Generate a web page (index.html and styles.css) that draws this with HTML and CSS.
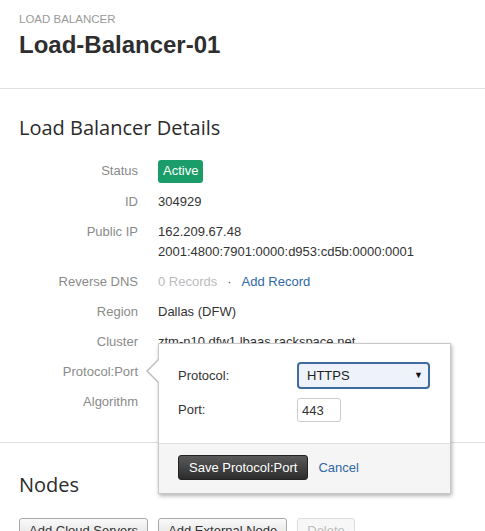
FILE: index.html
```html
<!DOCTYPE html>
<html lang="en">
<head>
    <meta charset="UTF-8">
    <meta name="viewport" content="width=device-width, initial-scale=1.0">
    <title>Load-Balancer-01</title>
    <link rel="stylesheet" href="styles.css">
</head>
<body>

<!-- page header -->
<div class="page-header">
    <div class="eyebrow">LOAD BALANCER</div>
    <h1 class="title">Load-Balancer-01</h1>
</div>

<!-- details -->
<div class="section">
    <h2 class="section-title">Load Balancer Details</h2>
    <dl class="details">
        <dt>Status</dt>
        <dd><span class="badge">Active</span></dd>

        <dt>ID</dt>
        <dd>304929</dd>

        <dt>Public IP</dt>
        <dd>162.209.67.48<br>2001:4800:7901:0000:d953:cd5b:0000:0001</dd>

        <dt>Reverse DNS</dt>
        <dd><span class="muted">0 Records</span><span class="sep">&middot;</span><a href="#" class="link">Add Record</a></dd>

        <dt>Region</dt>
        <dd>Dallas (DFW)</dd>

        <dt>Cluster</dt>
        <dd>ztm-n10.dfw1.lbaas.rackspace.net</dd>

        <dt>Protocol:Port</dt>
        <dd class="has-popover">
            <div class="popover">
                <div class="popover-body">
                    <label for="protocol">Protocol:</label>
                    <span class="select-wrap">
                        <select id="protocol" class="select">
                            <option>HTTPS</option>
                            <option>HTTP</option>
                        </select>
                    </span>

                    <label for="port">Port:</label>
                    <span><input type="text" id="port" class="port-input" value="443"></span>
                </div>
                <div class="popover-footer">
                    <button class="btn-dark">Save Protocol:Port</button>
                    <a href="#" class="link">Cancel</a>
                </div>
            </div>
        </dd>

        <dt>Algorithm</dt>
        <dd></dd>
    </dl>
</div>

<!-- nodes -->
<div class="section nodes">
    <h2 class="section-title">Nodes</h2>
    <div class="toolbar">
        <button class="btn">Add Cloud Servers</button>
        <button class="btn">Add External Node</button>
        <button class="btn" disabled>Delete</button>
    </div>
</div>

</body>
</html>
```

FILE: styles.css
```css
body {
    margin: 0;
    font-family: "Liberation Sans", Arial, sans-serif;
    font-size: 13px;
    color: #333;
    background-color: #fff;
    overflow: hidden;
}

.page-header {
    padding: 12px 19px 29px;
    border-bottom: 1px solid #e0e0e0;
}

.eyebrow {
    font-size: 11.5px;
    line-height: 14px;
    color: #999;
}

.title {
    margin: 5px 0 0;
    font-size: 24px;
    line-height: 28px;
    font-weight: bold;
    color: #2e2e2e;
}

.section {
    padding: 27px 19px 30px;
    border-bottom: 1px solid #e0e0e0;
}

.section-title {
    margin: 0;
    font-family: "Open Sans", sans-serif;
    font-size: 20px;
    line-height: 24px;
    font-weight: normal;
    color: #2b2b2b;
}

/* 詳細リスト */
.details {
    display: grid;
    grid-template-columns: 119px 1fr;
    grid-auto-rows: minmax(20px, auto);
    column-gap: 20px;
    row-gap: 10px;
    margin: 21px 0 0;
    line-height: 20px;
}

.details dt {
    text-align: right;
    color: #8a8a8a;
}

.details dd {
    margin: 0;
    white-space: nowrap;
}

.badge {
    display: inline-block;
    padding: 1px 5px 2px;
    margin: -2px 0 -1px;
    border-radius: 3px;
    background-color: #1a9d68;
    color: #fff;
}

.muted {
    color: #bbb;
}

.sep {
    margin: 0 10px;
    color: #555;
}

.link {
    color: #2f67a5;
    text-decoration: none;
}

/* ポップオーバー */
.has-popover {
    position: relative;
}

.popover {
    position: absolute;
    top: -19px;
    left: 0;
    width: 291px;
    background-color: #fff;
    border: 1px solid #c8c8c8;
    box-shadow: 1px 2px 4px rgba(0, 0, 0, 0.3);
    white-space: normal;
    z-index: 10;
}

.popover::before,
.popover::after {
    content: "";
    position: absolute;
    top: 15px;
    border-style: solid;
    border-color: transparent;
}

.popover::before {
    left: -13px;
    border-width: 12px 12px 12px 0;
    border-right-color: #bbb;
}

.popover::after {
    left: -11px;
    border-width: 12px 12px 12px 0;
    border-right-color: #fff;
}

.popover-body {
    display: grid;
    grid-template-columns: 119px 1fr;
    row-gap: 9px;
    align-items: center;
    padding: 18px 18px 21px 19px;
}

.popover-body label {
    color: #333;
}

.select-wrap {
    position: relative;
    display: block;
}

.select-wrap::after {
    content: "\25BC";
    position: absolute;
    right: 9px;
    top: 7px;
    font-size: 9px;
    line-height: 12px;
    color: #111;
    pointer-events: none;
}

.select {
    appearance: none;
    -webkit-appearance: none;
    width: 133px;
    height: 27px;
    padding: 0 8px;
    border: 2px solid #3f6b9e;
    border-radius: 4px;
    background-color: #eef3fb;
    font-family: "Liberation Sans", Arial, sans-serif;
    font-size: 13px;
    color: #222;
    outline: none;
}

.port-input {
    box-sizing: border-box;
    width: 44px;
    height: 24px;
    padding: 0 4px;
    border: 1px solid #ccc;
    border-radius: 3px;
    font-family: "Liberation Sans", Arial, sans-serif;
    font-size: 13px;
    color: #333;
}

.popover-footer {
    display: flex;
    align-items: center;
    gap: 10px;
    padding: 11px 19px 13px;
    border-top: 1px solid #ddd;
    background-color: #f5f5f5;
}

.btn-dark {
    padding: 4px 10px;
    border: 1px solid #222;
    border-radius: 3px;
    background: linear-gradient(#5a5a5a, #2c2c2c);
    color: #fff;
    font-family: "Liberation Sans", Arial, sans-serif;
    font-size: 13px;
    line-height: 15px;
    cursor: pointer;
}

/* ノード */
.nodes {
    padding-top: 30px;
    border-bottom: none;
}

.toolbar {
    display: flex;
    gap: 10px;
    margin-top: 21px;
}

.btn {
    padding: 4px 9px;
    border: 1px solid #a9a9a9;
    border-radius: 3px;
    background: linear-gradient(#fafafa, #dcdcdc);
    color: #333;
    font-family: "Liberation Sans", Arial, sans-serif;
    font-size: 13px;
    line-height: 15px;
    cursor: pointer;
}

.btn:disabled {
    border-color: #ddd;
    background: #f7f7f7;
    color: #bbb;
    cursor: default;
}
```
